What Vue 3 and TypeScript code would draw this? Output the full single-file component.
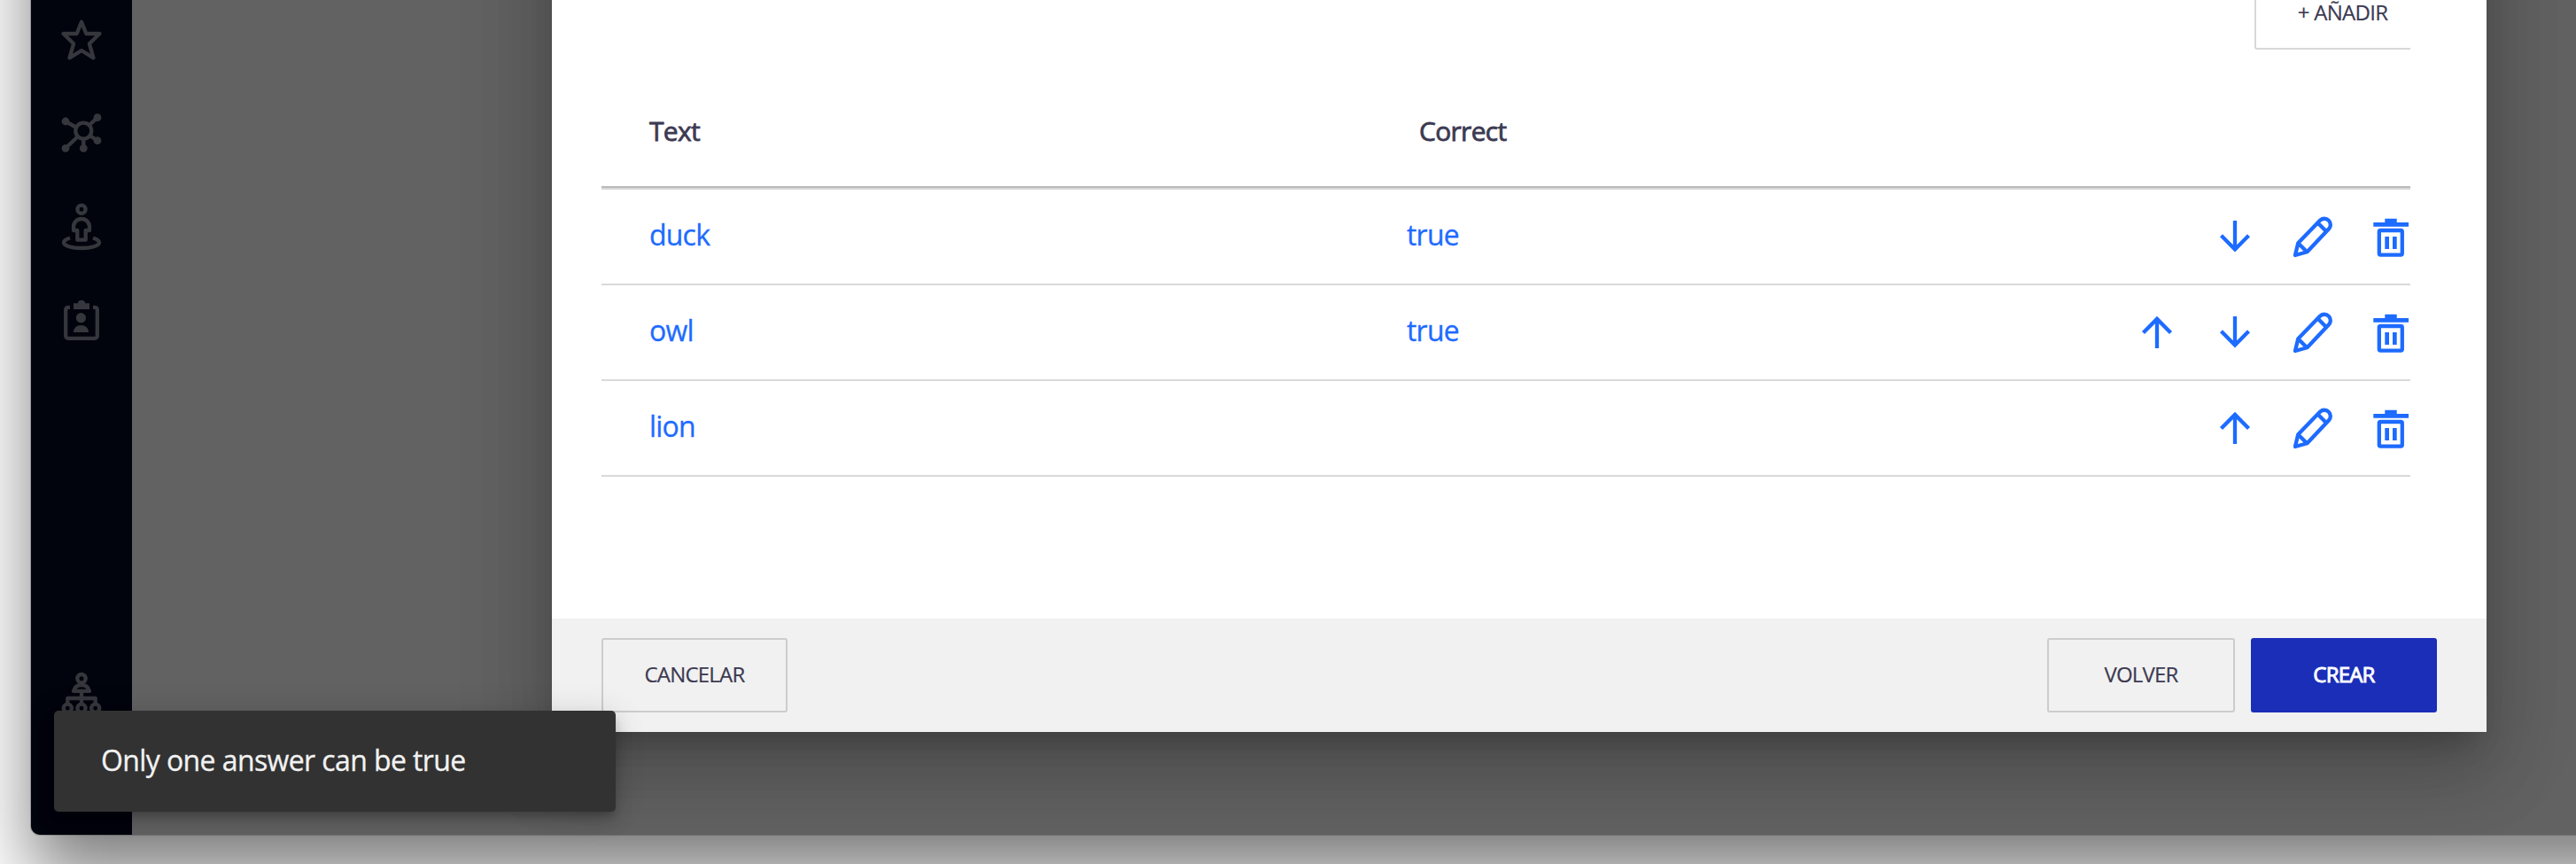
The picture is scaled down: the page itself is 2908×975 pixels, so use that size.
<script setup lang="ts">
type Action = 'up' | 'down' | 'edit' | 'remove'

interface Answer {
  text: string
  correct: string
  actions: Action[]
}

const answers: Answer[] = [
  { text: 'duck', correct: 'true', actions: ['down', 'edit', 'remove'] },
  { text: 'owl', correct: 'true', actions: ['up', 'down', 'edit', 'remove'] },
  { text: 'lion', correct: '', actions: ['up', 'edit', 'remove'] },
]
</script>

<template>
  <div class="desktop">
    <div class="window">
      <nav class="sidebar">
        <div class="nav-group">
          <svg class="nav-icon" viewBox="0 0 48 56">
            <path d="M24 8.7 29.3 22H44.5L32.9 33.3 37.5 49.3 24 41 10.5 49.3 15.1 33.3 3.5 22H18.7Z" />
          </svg>
          <svg class="nav-icon" viewBox="0 0 48 56">
            <circle cx="26.3" cy="25.7" r="9" />
            <path d="M6 15 18.5 22M42 10.7 33 19M6 45.3 20 32M26.3 45.3V35M42 36.7 33.5 31" />
            <g class="solid">
              <circle cx="6" cy="15" r="4.4" />
              <circle cx="42" cy="10.7" r="4.4" />
              <circle cx="6" cy="45.3" r="4.4" />
              <circle cx="26.3" cy="45.3" r="4.4" />
              <circle cx="42" cy="36.7" r="4.4" />
            </g>
          </svg>
          <svg class="nav-icon" viewBox="0 0 48 56">
            <circle cx="24" cy="8.3" r="4.6" />
            <path d="M15 32V28a9 9 0 0 1 18 0V32H28.7V42.7H19.3V32Z" />
            <path d="M11 40.5C6 42 4 44 4 45.5C4 49.5 13 52 24 52S44 49.5 44 45.5C44 44 42 42 37 40.5" />
          </svg>
          <svg class="nav-icon" viewBox="0 0 48 56">
            <path d="M11 12.8H9a2.8 2.8 0 0 0-2.8 2.8V45a2.8 2.8 0 0 0 2.8 2.8H39a2.8 2.8 0 0 0 2.8-2.8V15.6a2.8 2.8 0 0 0-2.8-2.8H37" />
            <g class="solid">
              <path d="M15 8.3H19.7a4.4 4.4 0 0 1 8.6 0H33V15H15Z" />
              <circle cx="23.4" cy="24.7" r="5.6" />
              <path d="M15 41c0-5 3.5-8 8.5-8s8.5 3 8.5 8z" />
            </g>
          </svg>
        </div>
        <svg class="nav-icon" viewBox="0 0 48 56">
          <circle cx="24" cy="9.7" r="4.7" />
          <path d="M15 23.9c1.5-5 5-6.9 9-6.9s7.5 1.9 9 6.9z" />
          <path d="M24 25V39M8.3 39V32H39.7V39" />
          <circle cx="8.3" cy="43.3" r="4.6" />
          <circle cx="24" cy="43.3" r="4.6" />
          <circle cx="39.7" cy="43.3" r="4.6" />
        </svg>
      </nav>

      <main class="backdrop">
        <section class="dialog">
          <div class="content">
            <div class="toolbar">
              <button class="btn add">+ AÑADIR</button>
            </div>
            <div class="row head">
              <span class="cell">Text</span>
              <span class="cell correct-head">Correct</span>
            </div>
            <div v-for="answer in answers" :key="answer.text" class="row">
              <span class="cell">{{ answer.text }}</span>
              <span class="cell correct">{{ answer.correct }}</span>
              <span class="actions">
                <svg v-for="action in answer.actions" :key="action" class="action" viewBox="0 0 44 48">
                  <path v-if="action === 'up'" d="M22 42V9M6.5 24.5 22 8.9 37.5 24.5" />
                  <path v-else-if="action === 'down'" d="M22 6V39M6.5 22.8 22 38.4 37.5 22.8" />
                  <path
                    v-else-if="action === 'edit'"
                    class="round"
                    d="M2 45 5.3 31.2 30.2 5.6A6.9 6.9 0 0 1 40 15.3L15.5 41.3ZM28 9 37 18M6 32 15 41"
                  />
                  <template v-else>
                    <rect x="8.8" y="17" width="26" height="27.6" rx="1.5" />
                    <path class="solid" d="M15.3 3.7H28.7V8H42V12.7H2.3V8H15.3ZM15.3 24H20V38H15.3ZM24 24H28.7V38H24Z" />
                  </template>
                </svg>
              </span>
            </div>
          </div>
          <footer class="footer">
            <button class="btn cancel">CANCELAR</button>
            <div class="footer-end">
              <button class="btn back">VOLVER</button>
              <button class="btn create">CREAR</button>
            </div>
          </footer>
        </section>
      </main>
    </div>
    <div class="snackbar" role="alert">Only one answer can be true</div>
  </div>
</template>

<style>
body {
  margin: 0;
  overflow: hidden;
}
</style>

<style scoped>
.desktop {
  position: relative;
  box-sizing: border-box;
  width: 2908px;
  height: 975px;
  padding-left: 35px;
  overflow: hidden;
  background: #fff;
  font-family: "Open Sans", "Noto Sans", sans-serif;
}

/* The window continues above and to the right of the visible area. */
.window {
  display: flex;
  width: 3200px;
  height: 1242px;
  margin-top: -300px;
  border-radius: 0 0 0 10px;
  background: #626262;
  box-shadow: 0 0 0 1px rgba(0, 0, 0, 0.2), 0 47px 80px rgba(0, 0, 0, 0.5);
}

.sidebar {
  display: flex;
  flex: none;
  flex-direction: column;
  justify-content: space-between;
  align-items: center;
  box-sizing: border-box;
  width: 114px;
  padding: 316px 0 130px;
  border-radius: 0 0 0 10px;
  background: #01030d;
}

.nav-group {
  display: flex;
  flex-direction: column;
  gap: 50px;
}

.nav-icon {
  display: block;
  width: 48px;
  height: 56px;
  fill: none;
  stroke: #36373d;
  stroke-width: 4.3;
  stroke-linejoin: round;
}

.nav-icon .solid {
  fill: #36373d;
  stroke: none;
}

.backdrop {
  flex: 1;
  padding-left: 474px;
}

.dialog {
  display: flex;
  flex-direction: column;
  box-sizing: border-box;
  width: 2184px;
  height: 1126px;
  padding-top: 300px;
  background: #fff;
  box-shadow: 0 22px 30px -14px rgba(0, 0, 0, 0.2), 0 48px 76px 6px rgba(0, 0, 0, 0.14),
    0 18px 92px 16px rgba(0, 0, 0, 0.12);
}

.content {
  flex: 1;
  width: 2042px;
  margin-left: 56px;
}

.toolbar {
  display: flex;
  align-items: flex-end;
  box-sizing: border-box;
  height: 56px;
  padding-left: 1866px;
  overflow: hidden;
}

.btn {
  flex: none;
  box-sizing: border-box;
  height: 84px;
  padding: 0 0 2px;
  border: 2px solid #ccc;
  border-radius: 3px;
  background: transparent;
  color: #3c3a52;
  font: 400 24px/1.4 "Open Sans", "Noto Sans", sans-serif;
  letter-spacing: -0.8px;
  -webkit-text-stroke: 0.2px currentColor;
}

.add {
  width: 200px;
  padding: 0 1px 0 0;
  border-color: #d8d8d8;
  letter-spacing: -0.7px;
}

.row {
  display: flex;
  align-items: center;
  box-sizing: border-box;
  height: 108px;
  padding-left: 54px;
  border-bottom: 2px solid #d9d9d9;
  color: #1d6bff;
  font-size: 32px;
  letter-spacing: -0.8px;
}

.head {
  height: 156px;
  margin-bottom: 2px;
  padding-top: 28px;
  border-bottom: 2px solid #bababa;
  box-shadow: 0 2px #d8d8d8;
  color: #3c3a52;
  font-size: 30px;
  letter-spacing: -0.7px;
}

.cell {
  flex: none;
  box-sizing: border-box;
  width: 855px;
  padding-bottom: 6px;
  -webkit-text-stroke: 0.3px currentColor;
}

.head .cell {
  padding-bottom: 0;
  -webkit-text-stroke-width: 0.8px;
}

.head .correct-head {
  padding-left: 14px;
}

.correct {
  width: auto;
}

.actions {
  display: flex;
  flex: 1;
  justify-content: flex-end;
  gap: 44px;
}

.action {
  width: 44px;
  height: 48px;
  fill: none;
  stroke: #1d6bff;
  stroke-width: 4.3;
}

.action .round {
  stroke-linejoin: round;
}

.action .solid {
  fill: #1d6bff;
  stroke: none;
}

.footer {
  display: flex;
  justify-content: space-between;
  align-items: center;
  box-sizing: border-box;
  height: 128px;
  padding: 0 56px;
  background: #f1f1f1;
}

.footer-end {
  display: flex;
  gap: 18px;
}

.cancel,
.create {
  width: 210px;
}

.back {
  width: 212px;
}

.create {
  border-color: #1a2eb8;
  background: #1a2eb8;
  color: #fff;
  -webkit-text-stroke-width: 0.9px;
}

.snackbar {
  position: absolute;
  left: 61px;
  top: 802px;
  box-sizing: border-box;
  width: 634px;
  height: 114px;
  padding-left: 53px;
  border-radius: 5px;
  background: #323232;
  box-shadow: 0 6px 10px -2px rgba(0, 0, 0, 0.2), 0 12px 20px rgba(0, 0, 0, 0.14), 0 2px 36px rgba(0, 0, 0, 0.12);
  color: #f2f2f2;
  font-size: 32px;
  letter-spacing: -0.6px;
  line-height: 112px;
  -webkit-text-stroke: 0.3px currentColor;
}
</style>
